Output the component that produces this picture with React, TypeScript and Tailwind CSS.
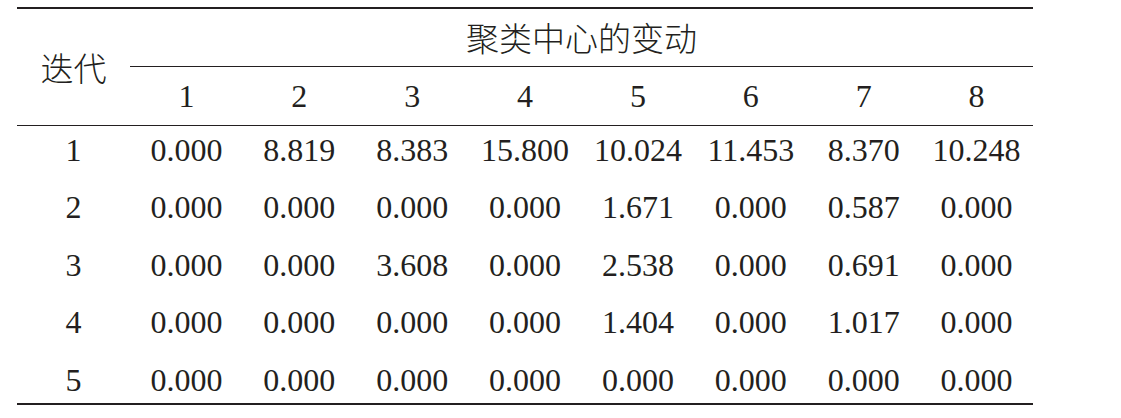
import React from "react";

const rows = [
  ["1", "0.000", "8.819", "8.383", "15.800", "10.024", "11.453", "8.370", "10.248"],
  ["2", "0.000", "0.000", "0.000", "0.000", "1.671", "0.000", "0.587", "0.000"],
  ["3", "0.000", "0.000", "3.608", "0.000", "2.538", "0.000", "0.691", "0.000"],
  ["4", "0.000", "0.000", "0.000", "0.000", "1.404", "0.000", "1.017", "0.000"],
  ["5", "0.000", "0.000", "0.000", "0.000", "0.000", "0.000", "0.000", "0.000"],
];

export default function App() {
  return (
    <div className="w-[1121px] h-[418px] bg-white pt-[7px] pl-[17px]">
      <div className="w-[1016px] border-t-2 border-b-2 border-[#231f20] text-[#231f20] font-[family-name:Liberation_Serif,serif]">
        {/* header */}
        <div className="flex border-b border-[#231f20]">
          <div className="w-[113px] flex items-center justify-center text-[33px] leading-none font-[family-name:Noto_Sans_CJK_SC,sans-serif] font-light">
            迭代
          </div>
          <div className="flex-1 flex flex-col">
            <div className="h-[58px] flex items-center justify-center border-b border-[#231f20] text-[33px] leading-none font-[family-name:Noto_Sans_CJK_SC,sans-serif] font-light">
              聚类中心的变动
            </div>
            <div className="h-[58px] grid grid-cols-8 items-center text-[32px] leading-8">
              {[1, 2, 3, 4, 5, 6, 7, 8].map((n) => (
                <div key={n} className="text-center">
                  {n}
                </div>
              ))}
            </div>
          </div>
        </div>

        {/* body */}
        <div className="flex flex-col gap-[25.4px] pt-[8px] pb-[7px]">
          {rows.map((r) => (
            <div key={r[0]} className="flex h-[32px] items-center text-[32px] leading-8">
              <div className="w-[113px] text-center">{r[0]}</div>
              <div className="flex-1 grid grid-cols-8">
                {r.slice(1).map((v, i) => (
                  <div key={i} className="text-center">
                    {v}
                  </div>
                ))}
              </div>
            </div>
          ))}
        </div>
      </div>
    </div>
  );
}
